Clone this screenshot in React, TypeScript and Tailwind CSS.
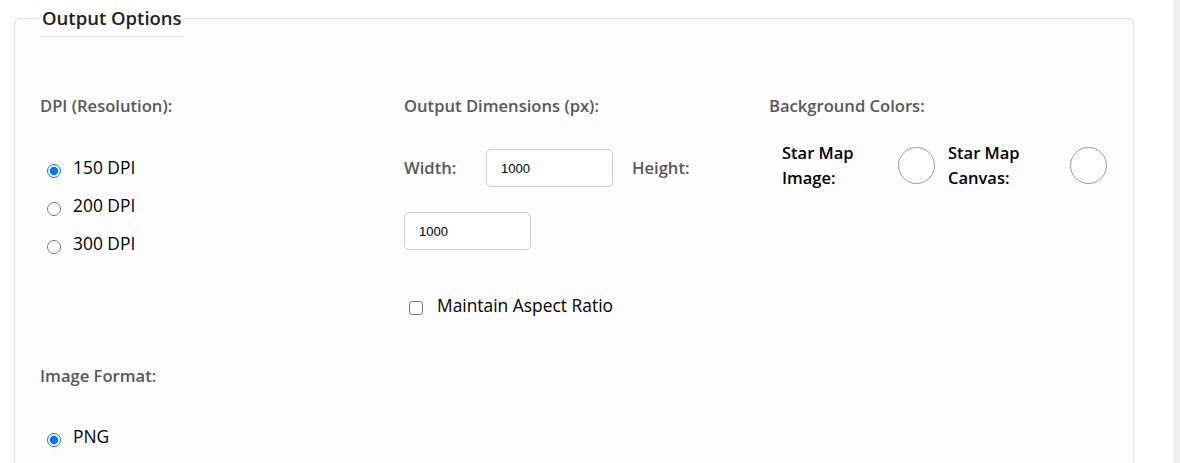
import React from 'react';

const Section = ({ title }: { title: string }) => (
    <div className="text-[16.6px] leading-6 font-semibold text-[#585858]">{title}</div>
);

const RadioRow = ({ label, checked, name }: { label: string; checked?: boolean; name: string }) => (
    <label className="flex h-[38px] items-center">
        <input type="radio" name={name} defaultChecked={checked} className="ml-[7px] mt-2 h-[14px] w-[14px] shrink-0" />
        <span className="ml-3 text-[17.4px] leading-6 text-black">{label}</span>
    </label>
);

const Swatch = () => <div className="h-[37px] w-[37px] shrink-0 rounded-full border border-[#999] bg-white"></div>;

const App = () => {
    return (
        <div className="flex h-[463px] overflow-hidden bg-white font-['Open_Sans',sans-serif]">
            <div className="w-[1173px] pl-[14px]">
                <fieldset className="h-[600px] w-[1120px] rounded-md border border-[#dcdcdc] bg-[#fdfdfd] px-[25px]">
                    <legend className="border-b border-[#e6e6e6] px-0.5 pt-1 pb-[5px] text-[18.5px] leading-[27px] font-semibold text-[#222]">
                        Output Options
                    </legend>

                    <div className="mt-[57px] grid grid-cols-[364px_365px_1fr]">
                        {/* dpi + format */}
                        <div>
                            <Section title="DPI (Resolution):" />
                            <div className="mt-[30px]">
                                <RadioRow name="dpi" label="150 DPI" checked />
                                <RadioRow name="dpi" label="200 DPI" />
                                <RadioRow name="dpi" label="300 DPI" />
                            </div>

                            <div className="mt-[102px]">
                                <Section title="Image Format:" />
                                <div className="mt-[29px]">
                                    <RadioRow name="fmt" label="PNG" checked />
                                </div>
                            </div>
                        </div>

                        {/* dimensions */}
                        <div>
                            <Section title="Output Dimensions (px):" />
                            <div className="mt-[31px] flex items-center">
                                <span className="w-[82px] text-[16.6px] font-semibold text-[#585858]">Width:</span>
                                <input
                                    type="text"
                                    defaultValue="1000"
                                    className="h-[38px] w-[127px] rounded-[5px] border border-[#ccc] bg-white px-[14px] font-['Liberation_Sans',sans-serif] text-[13px] text-black"
                                />
                                <span className="ml-[19px] text-[16.6px] font-semibold text-[#585858]">Height:</span>
                            </div>
                            <input
                                type="text"
                                defaultValue="1000"
                                className="mt-[25px] block h-[38px] w-[127px] rounded-[5px] border border-[#ccc] bg-white px-[14px] font-['Liberation_Sans',sans-serif] text-[13px] text-black"
                            />
                            <label className="mt-[36px] flex h-[38px] items-center">
                                <input type="checkbox" className="ml-[5px] mt-[6px] h-[14px] w-[14px]" />
                                <span className="ml-[14px] text-[17.4px] leading-6 text-black">Maintain Aspect Ratio</span>
                            </label>
                        </div>

                        {/* colors */}
                        <div>
                            <Section title="Background Colors:" />
                            <div className="mt-[22px] flex items-center">
                                <div className="ml-[13px] w-[116px] text-[16.5px] leading-[25px] font-semibold text-black">
                                    <div className="w-[90px]">Star Map Image:</div>
                                </div>
                                <Swatch />
                                <div className="ml-[13px] w-[122px] text-[16.5px] leading-[25px] font-semibold text-black">
                                    <div className="w-[90px]">Star Map Canvas:</div>
                                </div>
                                <Swatch />
                            </div>
                        </div>
                    </div>
                </fieldset>
            </div>
            <div className="flex-1 bg-[#efeff0]"></div>
        </div>
    );
};

export default App;
